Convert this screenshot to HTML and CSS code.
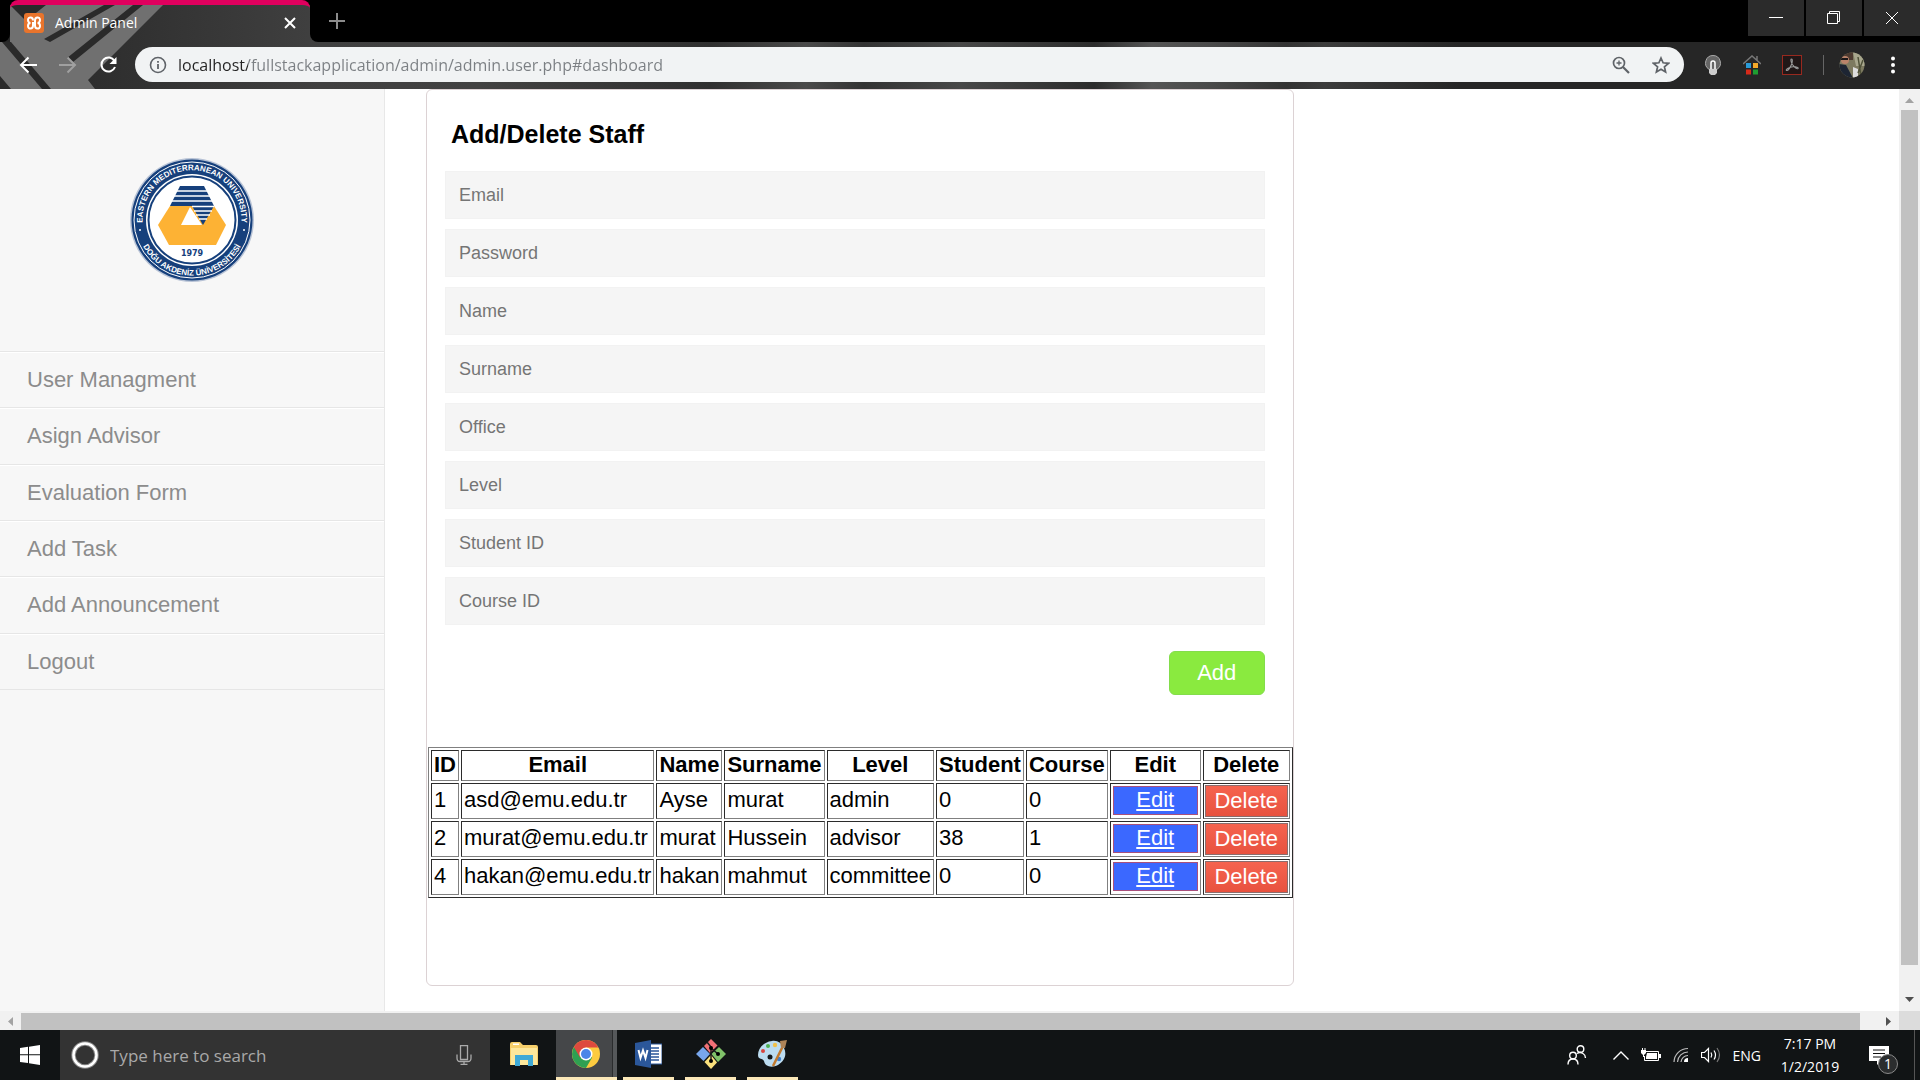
FILE: index.html
```html
<!DOCTYPE html>
<html lang="en">
<head>
<meta charset="utf-8">
<title>Admin Panel</title>
<link rel="stylesheet" href="styles.css">
</head>
<body>
<header class="browser">
  <svg class="theme" width="320" height="89" viewBox="0 0 320 89" aria-hidden="true">
    <defs><linearGradient id="shade" x1="0" x2="1"><stop offset="0" stop-color="#262626"/><stop offset="1" stop-color="#404040"/></linearGradient></defs>
    <rect width="320" height="89" fill="url(#shade)"/>
    <path d="M10 5H163L88 80L95 89H0V42H10Z" fill="#707070"/>
    <path d="M10 5H46L26 21ZM104 5H115L50 42L44 39ZM133 5H143L73 62L67 58ZM2 42H11L51 89H42ZM0 76L11 89H0Z" fill="#2a2a2a"/>
    <path d="M0 0H320V5H0Z" fill="#000"/>
  </svg>
  <div class="tabstrip">
    <div class="strip-left"></div>
    <div class="tab">
      <svg width="20" height="20" viewBox="0 0 20 20" aria-hidden="true"><rect width="20" height="20" rx="3" fill="#e8742c"/><path d="M9 7.5C9 3.500 4 3.500 4 7C4 9 5.500 10 6.500 10C5 10 4 11.500 4 13C4 16.500 9 16.500 9 12.500V10H11V7.500C11 3.500 16 3.500 16 7C16 9 14.500 10 13.500 10C15 10 16 11.500 16 13C16 16.500 11 16.500 11 12.500V10" fill="none" stroke="#fff" stroke-width="2"/></svg>
      <span class="tab-title">Admin Panel</span>
      <button class="icon-btn" aria-label="Close tab"><svg width="12" height="12" viewBox="0 0 12 12"><path d="M1 1L11 11M11 1L1 11" stroke="#fff" stroke-width="2"/></svg></button>
    </div>
    <div class="strip-right">
      <button class="icon-btn new-tab" aria-label="New tab"><svg width="16" height="16" viewBox="0 0 16 16"><path d="M8 0V16M0 8H16" stroke="#8c8c8c" stroke-width="2"/></svg></button>
      <div class="window-buttons">
        <button aria-label="Minimize"><svg width="14" height="14" viewBox="0 0 14 14"><path d="M0 6.500H14" stroke="#fff"/></svg></button>
        <button aria-label="Restore"><svg width="14" height="14" viewBox="0 0 14 14"><path d="M.5 2.500H10.500V12.500H.5ZM2.500 2.500V.5H12.500V10.500H10.500" fill="none" stroke="#fff"/></svg></button>
        <button aria-label="Close"><svg width="14" height="14" viewBox="0 0 14 14"><path d="M1 1L13 13M13 1L1 13" stroke="#fff"/></svg></button>
      </div>
    </div>
  </div>
  <div class="toolbar">
    <nav class="history">
      <button class="icon-btn" aria-label="Back"><svg width="18" height="18" viewBox="0 0 18 18"><path d="M18 9H2M9.500 1.500L2 9L9.500 16.500" fill="none" stroke="#fff" stroke-width="2"/></svg></button>
      <button class="icon-btn" aria-label="Forward"><svg width="18" height="18" viewBox="0 0 18 18"><path d="M0 9H16M8.500 1.500L16 9L8.500 16.500" fill="none" stroke="#a0a0a0" stroke-width="2"/></svg></button>
      <button class="icon-btn" aria-label="Reload"><svg width="18" height="18" viewBox="0 0 18 18"><path d="M15.500 5A7 7 0 1 0 16 11" fill="none" stroke="#fff" stroke-width="2"/><path d="M17.500 1V8H10.500Z" fill="#fff"/></svg></button>
    </nav>
    <div class="omnibox">
      <svg width="18" height="18" viewBox="0 0 18 18" aria-hidden="true"><circle cx="9" cy="9" r="7.500" fill="none" stroke="#5f6368" stroke-width="1.600"/><path d="M9 8V13M9 5V6.800" stroke="#5f6368" stroke-width="1.800"/></svg>
      <input class="url" type="text" aria-label="Address" value="localhost/fullstackapplication/admin/admin.user.php#dashboard">
      <button class="icon-btn" aria-label="Zoom"><svg width="18" height="18" viewBox="0 0 18 18"><circle cx="7" cy="7" r="5.500" fill="none" stroke="#5f6368" stroke-width="1.700"/><path d="M11 11L17 17" stroke="#5f6368" stroke-width="2.200"/><path d="M7 4.500V9.500M4.500 7H9.500" stroke="#5f6368" stroke-width="1.300"/></svg></button>
      <button class="icon-btn" aria-label="Bookmark"><svg width="18" height="18" viewBox="0 0 18 18"><path d="M9 2L11.100 6.800L16.500 7.300L12.400 10.800L13.600 16L9 13.200L4.400 16L5.600 10.800L1.500 7.300L6.900 6.800Z" fill="none" stroke="#5f6368" stroke-width="1.700"/></svg></button>
    </div>
    <div class="extensions">
      <svg width="18" height="20" viewBox="0 0 18 20" aria-hidden="true"><path d="M9 .5A7.500 7.500 0 0 0 5 14.300H13A7.500 7.500 0 0 0 9 .5Z" fill="#666" stroke="#aaa"/><path d="M7 14V8A2 2 0 0 1 11 8V14" fill="none" stroke="#fff" stroke-width="1.500"/><path d="M5 14H13V18L11 20H7L5 18Z" fill="#ccc"/></svg>
      <svg width="18" height="20" viewBox="0 0 18 20" aria-hidden="true"><path d="M0 9L9 1L18 9M14 1V5" fill="none" stroke="#777" stroke-width="1.500"/><rect x="3" y="8" width="5" height="5" fill="#2a9bd8"/><rect x="10" y="8" width="5" height="5" fill="#f3a92a"/><rect x="3" y="14.500" width="5" height="5" fill="#d62a1a"/><rect x="10" y="14.500" width="5" height="5" fill="#1f9e31"/></svg>
      <svg width="20" height="20" viewBox="0 0 20 20" aria-hidden="true"><rect x=".5" y=".5" width="19" height="19" fill="#211717" stroke="#98291f"/><path d="M9.500 4C11 4 10 8 9.700 9C8.500 12 6 16 4.500 15.500C3 14.500 8 12 11 11.700C14 11.500 17 12.500 16 13.500C14.500 14.500 9.800 10 9.200 7C8.800 5 8.700 4 9.500 4Z" fill="none" stroke="#999" stroke-width="1.100"/></svg>
      <span class="divider"></span>
      <svg class="avatar" width="26" height="26" viewBox="0 0 26 26" aria-hidden="true"><defs><clipPath id="face"><circle cx="13" cy="13" r="12.500"/></clipPath></defs><g clip-path="url(#face)"><rect width="26" height="26" fill="#7d7a60"/><path d="M0 0H14V8H0Z" fill="#4d3a30"/><path d="M14 0H26V14H17Z" fill="#a8a78d"/><path d="M0 12L7 13L14 26H0Z" fill="#1d2533"/><circle cx="6" cy="8" r="4" fill="#b9836a"/><path d="M2 6H9V8H2Z" fill="#1b1718"/><path d="M14 15L19 17V26H14Z" fill="#ddd"/><path d="M19 5L22 24M24 8L19 21" stroke="#4f5138" stroke-width="1.500"/></g></svg>
      <button class="icon-btn" aria-label="Menu"><svg width="6" height="18" viewBox="0 0 6 18"><circle cx="3" cy="2.500" r="2" fill="#fff"/><circle cx="3" cy="9" r="2" fill="#fff"/><circle cx="3" cy="15.500" r="2" fill="#fff"/></svg></button>
    </div>
  </div>
</header>

<div class="viewport">
  <div class="page">
    <aside class="sidebar">
      <svg class="logo" width="126" height="126" viewBox="-63 -63 126 126" role="img" aria-label="University seal">
        <defs><path id="arc-top" d="M-48.700 8.600A49.500 49.500 0 1 1 48.700 8.600"/><path id="arc-bottom" d="M-55.500 0A55.500 55.500 0 0 0 55.500 0"/></defs>
        <circle r="62" fill="#b8c3d6"/><circle r="60.500" fill="#16407c"/><circle r="58" fill="none" stroke="#fff" stroke-width="1"/>
        <circle r="46" fill="#fff"/><circle r="43.500" fill="none" stroke="#16407c" stroke-width="2"/>
        <text class="seal-text"><textPath href="#arc-top" startOffset="50%">EASTERN MEDITERRANEAN UNIVERSITY</textPath></text>
        <text class="seal-text"><textPath href="#arc-bottom" startOffset="50%">DOĞU AKDENİZ ÜNİVERSİTESİ</textPath></text>
        <circle cx="-52" cy="10" r="1" fill="#fff"/><circle cx="52" cy="10" r="1" fill="#fff"/>
        <path d="M-12-34H12L22-14H-22Z" fill="#16407c"/>
        <path d="M-22-14H22L34 5L24 25H-23L-34 5Z" fill="#fdb234"/>
        <path d="M0-14H22L11 5Z" fill="#16407c"/>
        <path d="M-2-13L-11 5H10Z" fill="#fff"/>
        <path d="M-20-29H20M-20-24H20M-20-19H22M0-13.500H22M2-9H20M4-5H18M7-1H15" stroke="#fff" stroke-width="1.500"/>
        <text class="seal-year" y="36">1979</text>
      </svg>
      <nav class="menu">
        <a href="#users">User Managment</a>
        <a href="#advisor">Asign Advisor</a>
        <a href="#evaluation">Evaluation Form</a>
        <a href="#task">Add Task</a>
        <a href="#announcement">Add Announcement</a>
        <a href="#logout">Logout</a>
      </nav>
    </aside>
    <main class="content">
      <section class="card">
        <form class="staff-form">
          <h1>Add/Delete Staff</h1>
          <input type="text" placeholder="Email" aria-label="Email">
          <input type="password" placeholder="Password" aria-label="Password">
          <input type="text" placeholder="Name" aria-label="Name">
          <input type="text" placeholder="Surname" aria-label="Surname">
          <input type="text" placeholder="Office" aria-label="Office">
          <input type="text" placeholder="Level" aria-label="Level">
          <input type="text" placeholder="Student ID" aria-label="Student ID">
          <input type="text" placeholder="Course ID" aria-label="Course ID">
          <button class="add" type="button">Add</button>
        </form>
        <table class="staff">
          <thead><tr><th>ID</th><th>Email</th><th>Name</th><th>Surname</th><th>Level</th><th>Student</th><th>Course</th><th>Edit</th><th>Delete</th></tr></thead>
          <tbody>
            <tr><td>1</td><td>asd@emu.edu.tr</td><td>Ayse</td><td>murat</td><td>admin</td><td>0</td><td>0</td><td class="action"><a class="edit" href="#edit-1">Edit</a></td><td class="action"><button class="delete">Delete</button></td></tr>
            <tr><td>2</td><td>murat@emu.edu.tr</td><td>murat</td><td>Hussein</td><td>advisor</td><td>38</td><td>1</td><td class="action"><a class="edit" href="#edit-2">Edit</a></td><td class="action"><button class="delete">Delete</button></td></tr>
            <tr><td>4</td><td>hakan@emu.edu.tr</td><td>hakan</td><td>mahmut</td><td>committee</td><td>0</td><td>0</td><td class="action"><a class="edit" href="#edit-4">Edit</a></td><td class="action"><button class="delete">Delete</button></td></tr>
          </tbody>
        </table>
      </section>
    </main>
  </div>
  <div class="vscroll" aria-hidden="true">
    <svg width="9" height="5" viewBox="0 0 9 5"><path d="M0 5L4.500 0L9 5Z" fill="#a3a3a3"/></svg>
    <div class="thumb"></div>
    <svg width="9" height="5" viewBox="0 0 9 5"><path d="M0 0H9L4.500 5Z" fill="#505050"/></svg>
  </div>
  <div class="hscroll" aria-hidden="true">
    <svg width="5" height="9" viewBox="0 0 5 9"><path d="M5 0V9L0 4.500Z" fill="#a3a3a3"/></svg>
    <div class="thumb"></div>
    <svg width="5" height="9" viewBox="0 0 5 9"><path d="M0 0L5 4.500L0 9Z" fill="#505050"/></svg>
  </div>
  <div class="corner"></div>
</div>

<footer class="taskbar">
  <button class="start" aria-label="Start"><svg width="20" height="20" viewBox="0 0 20 20"><path d="M0 3L8 1.800V9.300H0ZM9 1.700L20 0V9.300H9ZM0 10.300H8V18L0 17ZM9 10.300H20V20L9 18.300Z" fill="#fff"/></svg></button>
  <div class="search">
    <svg width="28" height="28" viewBox="0 0 28 28" aria-hidden="true"><circle cx="14" cy="14" r="11.500" fill="none" stroke="#888" stroke-width="4.500"/><circle cx="14" cy="14" r="11.500" fill="none" stroke="#fff" stroke-width="2.500"/></svg>
    <input type="text" placeholder="Type here to search" aria-label="Search">
    <svg width="16" height="20" viewBox="0 0 16 20" aria-hidden="true"><path d="M4.500.5H11.500V14.500H4.500ZM1 9.500V13Q1 16.500 4 16.500H12Q15 16.500 15 13V9.500M8 16.500V19.500M4.500 19.500H11.500" fill="none" stroke="#aaa" stroke-width="1.300"/></svg>
  </div>
  <div class="apps">
    <button aria-label="File Explorer"><svg width="28" height="26" viewBox="0 0 28 26"><path d="M0 3Q0 1 2 1H10L13 4H26Q28 4 28 6V24H0Z" fill="#f6cf6b"/><path d="M1 7H27V24H1Z" fill="#fde79b"/><path d="M3 2.500H9V4H3Z" fill="#fff"/><path d="M5 14H23V25H18V19H10V25H5Z" fill="#3fa9d6"/></svg></button>
    <button class="open active" aria-label="Chrome"><svg width="28" height="28" viewBox="0 0 28 28"><circle cx="14" cy="14" r="14" fill="#fccb40"/><path d="M14 14L1.900 7A14 14 0 0 0 14 28L20.100 17.500Z" fill="#2fa052"/><path d="M14 7.500H26.400A14 14 0 0 0 1.900 7L8 17.500Z" fill="#dd4a3e"/><circle cx="14" cy="14" r="6.500" fill="#fff"/><circle cx="14" cy="14" r="5" fill="#4a86e8"/></svg></button>
    <button class="open" aria-label="Word"><svg width="27" height="28" viewBox="0 0 27 28"><path d="M14 4H27V24H14Z" fill="#fff" stroke="#2b579a"/><path d="M16 8H24M16 11H24M16 14H24M16 17H24M16 20H24" stroke="#2b579a" stroke-width="1.500"/><path d="M0 3L16 0V28L0 25Z" fill="#2b579a"/><path d="M3.500 10L5.500 18L8 10.500L10.500 18L12.500 10" fill="none" stroke="#fff" stroke-width="2"/></svg></button>
    <button class="open" aria-label="Git"><svg width="30" height="30" viewBox="0 0 30 30"><path d="M15 0L21.500 6.500L14 14L8 7Z" fill="#f07076"/><path d="M23 8L30 15L22 23L15.500 15Z" fill="#80c269"/><path d="M7 8L14 15L7.500 22L0 15Z" fill="#78a6ec"/><path d="M15 16L21 23.500L15 30L8.500 23Z" fill="#fbe17c"/><path d="M11 3L15 8V23M15 9L22 15" stroke="#1c1c1c" stroke-width="1.500" fill="none"/><circle cx="15" cy="9" r="2"/><circle cx="15" cy="22" r="2"/><circle cx="22" cy="15" r="2"/></svg></button>
    <button class="open" aria-label="Paint"><svg width="30" height="28" viewBox="0 0 30 28"><path d="M14 1C5 2 0 9 0 15C0 20 5 18 6 21C7 27 14 28 20 25C27 21 29 14 26 8C24 3 19 0 14 1Z" fill="#bcdcf0"/><circle cx="12" cy="17" r="2.500" fill="#14181a"/><circle cx="5" cy="11" r="2" fill="#d8453e"/><circle cx="10" cy="6" r="2" fill="#4cb050"/><circle cx="17" cy="5" r="2.200" fill="#f0c04a"/><circle cx="21" cy="19" r="2.200" fill="#3d7fd0"/><path d="M25 6L15 26" stroke="#c27a2e" stroke-width="2.500"/><path d="M22 1L29 0L27 8H23Z" fill="#ae8458"/></svg></button>
  </div>
  <div class="tray">
    <svg class="people" width="20" height="20" viewBox="0 0 20 20" aria-hidden="true"><circle cx="13.500" cy="4" r="3.300" fill="none" stroke="#fff" stroke-width="1.400"/><circle cx="6" cy="10.500" r="3.300" fill="none" stroke="#fff" stroke-width="1.400"/><path d="M1 19.500Q1 14 6 14Q11 14 11 19.500M10 8.500Q13 6.500 16 8.500Q18.500 10 18.500 13" fill="none" stroke="#fff" stroke-width="1.400"/></svg>
    <svg width="16" height="9" viewBox="0 0 16 9" aria-hidden="true"><path d="M.5 8.500L8 1L15.500 8.500" fill="none" stroke="#fff" stroke-width="1.400"/></svg>
    <svg width="20" height="14" viewBox="0 0 20 14" aria-hidden="true"><path d="M5 3.500H17.500V12.500H3.500V8" fill="none" stroke="#fff"/><path d="M6 5H16V11H5V9Z" fill="#fff"/><path d="M18 6H20V10H18ZM0 2H5V5L3 7V9H2V7L0 5ZM1 0H2V2H1ZM3.500 0H4.500V2H3.500Z" fill="#fff"/></svg>
    <svg width="16" height="16" viewBox="0 0 16 16" aria-hidden="true"><path d="M1 15A14 14 0 0 1 15 1.500M4.500 15A10.500 10.500 0 0 1 15 5M8 15A7 7 0 0 1 15 8.500" fill="none" stroke="#bbb" stroke-width="1.200"/><path d="M11 15A4 4 0 0 1 15 11V15Z" fill="#fff"/></svg>
    <svg width="20" height="16" viewBox="0 0 20 16" aria-hidden="true"><path d="M.5 5.500H3.500L7.500 1.500V14.500L3.500 10.500H.5Z" fill="none" stroke="#fff" stroke-width="1.200"/><path d="M10 5.500Q11.500 8 10 10.500M13 3.500Q16 8 13 12.500" fill="none" stroke="#fff" stroke-width="1.200"/><path d="M16 1Q21 8 16 15" fill="none" stroke="#777" stroke-width="1.200"/></svg>
    <span class="lang">ENG</span>
    <span class="clock"><span>7:17 PM</span><span>1/2/2019</span></span>
    <button class="notify" aria-label="Notifications"><svg width="20" height="20" viewBox="0 0 20 20"><path d="M0 1H20V16H12L8 20V16H0Z" fill="#fff"/><path d="M4 5H16M4 8.500H16M4 12H12" stroke="#111" stroke-width="1.200"/></svg><span class="badge">1</span></button>
    <span class="peek"></span>
  </div>
</footer>
</body>
</html>
```

FILE: styles.css
```css
* { box-sizing: border-box; }

body {
  margin: 0;
  height: 100vh;
  display: flex;
  flex-direction: column;
  overflow: hidden;
  font-family: "Liberation Sans", Arial, sans-serif;
  font-size: 22px;
  color: #000;
  background: #fff;
}

button, input { font: inherit; color: inherit; border: 0; padding: 0; background: none; }
svg { display: block; flex: none; }

/* Browser window */
.browser {
  position: relative;
  flex: none;
  font-family: "Open Sans", "Noto Sans", sans-serif;
  color: #fff;
  background: linear-gradient(90deg, #404040 320px, #424242 25%, #303030 37%, #4a4a4a 42%, #333 45%, #484848 50%, #2c2c2c 57%, #555 60%, #4a4a4a 63%, #333 67%, #3c3c3c 69%, #262626 76%);
}
.theme { position: absolute; left: 0; top: 0; }
.tabstrip { position: relative; display: flex; height: 42px; }
.strip-left { width: 10px; background: #000; border-bottom-right-radius: 8px; }
.tab {
  display: flex;
  align-items: center;
  width: 300px;
  padding: 0 14px 2px;
  gap: 11px;
  border-top: 5px solid #e0005e;
  border-radius: 8px 8px 0 0;
}
.tab-title { flex: 1; font-size: 14px; }
.strip-right {
  flex: 1;
  display: flex;
  justify-content: space-between;
  align-items: flex-start;
  background: #000;
  border-bottom-left-radius: 8px;
}
.icon-btn { display: grid; place-items: center; }
.new-tab { width: 34px; height: 42px; margin-left: 10px; }
.window-buttons { display: flex; gap: 2px; }
.window-buttons button { width: 56px; height: 36px; display: grid; place-items: center; background: #2b2b2b; }

.toolbar { position: relative; display: flex; align-items: center; height: 47px; padding: 0 24px 2px 0; }
.history { display: flex; gap: 22px; width: 135px; padding-left: 19px; }
.omnibox {
  flex: 1;
  display: flex;
  align-items: center;
  gap: 22px;
  height: 35px;
  padding: 0 14px;
  border-radius: 18px;
  background: #f1f3f4;
}
.url {
  flex: 1;
  height: 35px;
  margin-left: -11px;
  font-size: 16px;
  color: transparent;
  background: linear-gradient(90deg, #222 70px, #7b7f83 70px);
  background-clip: text;
}
.extensions { display: flex; align-items: center; gap: 21px; padding-left: 20px; }
.divider { width: 1px; height: 20px; background: #666; }
.avatar { margin: 0 4px 0 -6px; }

/* Scrolled page */
.viewport { flex: 1; min-height: 0; display: grid; grid-template: minmax(0, 1fr) 19px / minmax(0, 1fr) 21px; }
.page { display: flex; overflow: hidden; }
.sidebar { width: 385px; flex: none; border-right: 1px solid #e8e8e8; background: #f7f7f7; }
.logo { margin: 68px auto; }
.menu { display: grid; grid-auto-rows: 1fr; min-height: 339px; border-top: 1px solid #e6e6e6; }
.menu a {
  display: flex;
  align-items: center;
  padding: 0 27px;
  color: #8c8c8c;
  text-decoration: none;
  border-top: 1px solid #fff;
  border-bottom: 1px solid #e6e6e6;
}
.seal-text { font: bold 8px "Liberation Sans", Arial, sans-serif; fill: #fff; text-anchor: middle; }
.seal-year { font: bold 8px "DejaVu Sans", sans-serif; fill: #16407c; text-anchor: middle; }

.content { flex: 1; padding-left: 41px; }
.card { width: fit-content; border: 1px solid #dcd2d4; border-radius: 6px; padding: 0 0 87px 1px; }
.staff-form { display: flex; flex-direction: column; gap: 10px; padding: 0 28px 52px 17px; }
.staff-form h1 { margin: 30px 6px 12px; font-size: 25px; line-height: 29px; }
.staff-form input {
  height: 48px;
  padding: 0 13px;
  font-size: 18px;
  background: #f5f5f5;
  border: 1px solid #f2f2f2;
}
.staff-form input::placeholder { color: #757575; opacity: 1; }
.add {
  align-self: flex-end;
  width: 96px;
  height: 44px;
  margin-top: 16px;
  color: #fff;
  background: #8aea3f;
  border: 1px solid #83dd4b;
  border-radius: 6px;
}

.staff { border: 1px solid; border-color: #808080 #2b2b2b #2b2b2b #808080; border-spacing: 2px; line-height: 25px; }
.staff th, .staff td { padding: 1px 2px 3px; border: 1px solid; border-color: #2b2b2b #808080 #808080 #2b2b2b; vertical-align: top; white-space: nowrap; }
.staff td { padding: 3px 2px 2px 2px; }
.staff td.action { padding: 1px; }
.edit {
  display: block;
  width: 85px;
  height: 29px;
  margin: 1px;
  text-align: center;
  color: #fff;
  background: #3b68ff;
  border: 1px solid #a8507c;
}
.delete {
  display: block;
  width: 83px;
  height: 32px;
  padding-bottom: 2px;
  color: #fff;
  background: linear-gradient(#f5634f, #e8523f);
  border: 1px solid #8c6c6c;
}

.vscroll, .hscroll { display: flex; align-items: center; background: #f1f1f1; }
.vscroll { flex-direction: column; padding: 9px 2px 9px; gap: 7px; }
.vscroll .thumb { flex: 1; width: 17px; margin-bottom: 25px; background: #c1c1c1; }
.hscroll { padding: 2px 8px 0; gap: 8px; }
.hscroll .thumb { flex: 1; height: 17px; margin-right: 18px; background: #c1c1c1; }
.corner { background: #dcdcdc; }

/* Taskbar */
.taskbar {
  flex: none;
  display: flex;
  height: 50px;
  font-family: "Open Sans", "Noto Sans", sans-serif;
  font-size: 14px;
  color: #fff;
  background: #111415;
}
.start { width: 60px; display: grid; place-items: center; }
.search { width: 430px; display: flex; align-items: center; gap: 11px; padding: 0 18px 0 11px; background: #333; }
.search input { flex: 1; font-size: 17px; }
.search input::placeholder { color: #a9a9a9; opacity: 1; }
.apps { display: flex; gap: 11px; padding-left: 8px; }
.apps button { width: 51px; display: grid; place-items: center; border-bottom: 3px solid transparent; }
.apps .open { border-bottom-color: #fbe8b8; }
.apps .active { width: 61px; margin: 0 -5px 0 -4px; padding-right: 2px; background: linear-gradient(90deg, #454749 56px, #2a2c2d 56px, #2a2c2d 57px, #55585a 57px); }
.tray { flex: 1; display: flex; align-items: center; justify-content: flex-end; gap: 12px; }
.people { margin-right: 14px; }
.clock { display: flex; flex-direction: column; align-items: center; width: 66px; margin-left: 4px; line-height: 23px; }
.notify { position: relative; margin: 0 13px 0 14px; }
.badge {
  position: absolute;
  left: 9px;
  top: 9px;
  width: 20px;
  height: 20px;
  line-height: 18px;
  border: 1px solid #8a8a8a;
  border-radius: 10px;
  background: #2b2d2e;
}
.peek { align-self: stretch; width: 6px; border-left: 1px solid #555; }
```
